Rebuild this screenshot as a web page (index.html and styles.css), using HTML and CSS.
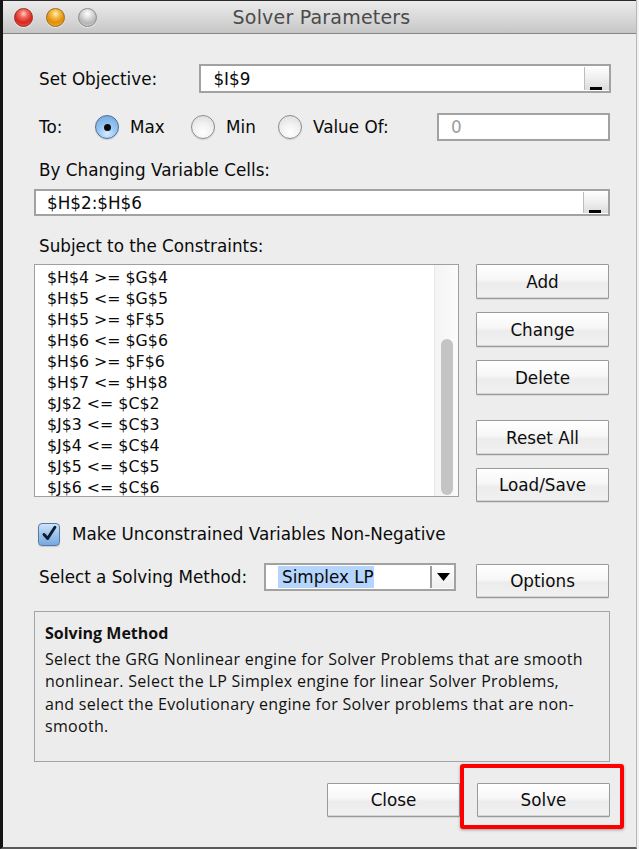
FILE: index.html
```html
<!DOCTYPE html>
<html>
<head>
<meta charset="utf-8">
<title>Solver Parameters</title>
<link rel="stylesheet" href="styles.css">
</head>
<body>
<div class="window">
  <div class="titlebar">
    <div class="lights"><span class="light red"></span><span class="light yellow"></span><span class="light grey"></span></div>
    <div class="title">Solver Parameters</div>
    <div></div>
  </div>
  <div class="content">
    <div class="row objective">
      <span class="lbl obj-lbl">Set Objective:</span>
      <div class="field picker-field obj-field"><span class="val">$I$9</span><span class="picker"><span class="bar"></span></span></div>
    </div>
    <div class="row to-row">
      <span class="lbl to-lbl">To:</span>
      <span class="radio on"><span class="dot"></span></span><span class="opt opt-max">Max</span>
      <span class="radio"></span><span class="opt opt-min">Min</span>
      <span class="radio"></span><span class="opt opt-val">Value Of:</span>
      <div class="field value-field"><span class="val dim">0</span></div>
    </div>
    <div class="lbl section-lbl var-lbl">By Changing Variable Cells:</div>
    <div class="field picker-field var-field"><span class="val">$H$2:$H$6</span><span class="picker"><span class="bar"></span></span></div>
    <div class="lbl section-lbl con-lbl">Subject to the Constraints:</div>
    <div class="constraints">
      <div class="list">
        <div class="items">
          <div>$H$4 &gt;= $G$4</div>
          <div>$H$5 &lt;= $G$5</div>
          <div>$H$5 &gt;= $F$5</div>
          <div>$H$6 &lt;= $G$6</div>
          <div>$H$6 &gt;= $F$6</div>
          <div>$H$7 &lt;= $H$8</div>
          <div>$J$2 &lt;= $C$2</div>
          <div>$J$3 &lt;= $C$3</div>
          <div>$J$4 &lt;= $C$4</div>
          <div>$J$5 &lt;= $C$5</div>
          <div>$J$6 &lt;= $C$6</div>
        </div>
        <div class="track"><div class="thumb"></div></div>
      </div>
      <div class="btn-col">
        <div class="btn">Add</div>
        <div class="btn">Change</div>
        <div class="btn">Delete</div>
        <div class="btn reset">Reset All</div>
        <div class="btn">Load/Save</div>
      </div>
    </div>
    <div class="row check-row">
      <span class="checkbox"><svg width="22" height="22" viewBox="0 0 22 22"><path d="M5.5 11.5 L9.5 16 L17.5 3.5" fill="none" stroke="#0f1c33" stroke-width="3.2" stroke-linecap="round" stroke-linejoin="round"/></svg></span>
      <span class="lbl check-lbl">Make Unconstrained Variables Non-Negative</span>
    </div>
    <div class="row method-row">
      <span class="lbl method-lbl">Select a Solving Method:</span>
      <div class="select"><span class="sel-text">Simplex LP</span><span class="sel-arrow"><svg width="13" height="8" viewBox="0 0 13 8"><path d="M0 0 H13 L6.5 8 Z" fill="#000"/></svg></span></div>
      <div class="btn options">Options</div>
    </div>
    <div class="info">
      <div class="info-title">Solving Method</div>
      <div class="info-text">Select the GRG Nonlinear engine for Solver Problems that are smooth<br>nonlinear. Select the LP Simplex engine for linear Solver Problems,<br>and select the Evolutionary engine for Solver problems that are non-<br>smooth.</div>
    </div>
    <div class="footer">
      <div class="btn">Close</div>
      <div class="btn">Solve</div>
    </div>
  </div>
  <div class="highlight"></div>
</div>
</body>
</html>
```

FILE: styles.css
```css
* { box-sizing: border-box; }
html, body { margin: 0; padding: 0; }
body {
  width: 639px;
  height: 849px;
  background: #f2f2f2;
  font-family: "DejaVu Sans", "Liberation Sans", sans-serif;
  font-size: 16.8px;
  color: #0a0a0a;
  overflow: hidden;
}
.window {
  position: relative;
  width: 637px;
  height: 849px;
  background: #ededed;
  border-left: 3px solid #141414;
  border-right: 1px solid #b8b8b8;
  border-bottom: 2px solid #5a5a5a;
}
.titlebar {
  height: 34px;
  border-top: 1px solid #2a2a2a;
  border-bottom: 1px solid #858585;
  background: linear-gradient(#ebebeb, #d6d6d6 60%, #c6c6c6);
  display: grid;
  grid-template-columns: 1fr auto 1fr;
  align-items: center;
}
.lights { display: flex; gap: 13px; padding-left: 11px; padding-top: 1px; }
.light {
  width: 19px; height: 19px; border-radius: 50%;
  box-shadow: 0 1px 1px rgba(255,255,255,0.6);
}
.light.red {
  background: radial-gradient(circle at 50% 28%, #ffd0c8 0, #f36b5f 25%, #d8261c 60%, #ee6a5e 100%);
  border: 1px solid #9b2b25;
}
.light.yellow {
  background: radial-gradient(circle at 50% 28%, #fff0c0 0, #f7c04a 25%, #de8d08 60%, #f6c24a 100%);
  border: 1px solid #a06a14;
}
.light.grey {
  background: radial-gradient(circle at 50% 28%, #ffffff 0, #dedede 30%, #b5b5b5 65%, #d8d8d8 100%);
  border: 1px solid #8c8c8c;
}
.title {
  font-size: 19px;
  color: #4b4b4b;
  padding-left: 4px;
  letter-spacing: 0.2px;
}
.content { padding: 30px 25px 0 31px; }
.row { display: flex; align-items: center; }
.lbl { white-space: nowrap; }
.objective { height: 29px; }
.obj-lbl { width: 166px; padding-left: 5px; }
.field {
  background: #fff;
  border: 2px solid #a2a2a2;
  display: flex;
  align-items: center;
}
.picker-field { padding: 1px 0 1px 12px; align-items: stretch; }
.picker-field .val { flex: 1; display: flex; align-items: center; }
.obj-field { width: 413px; height: 29px; }
.picker {
  width: 25px;
  border-left: 1px solid #bdbdbd;
  background: linear-gradient(#fdfdfd, #f0f0f0 45%, #dcdcdc);
  display: flex;
  align-items: flex-end;
  padding-left: 5px;
}
.bar { width: 12px; height: 3px; background: #050505; }
.to-row { height: 28px; margin-top: 20px; }
.to-lbl { width: 61px; padding-left: 5px; }
.radio {
  width: 24px; height: 24px; border-radius: 50%;
  border: 1px solid #8c8c8c;
  background: radial-gradient(circle at 50% 75%, #ffffff 0, #f1f1f1 45%, #d9d9d9 100%);
  box-shadow: 0 1px 1px rgba(0,0,0,0.12);
  margin-right: 11px;
  display: flex; align-items: center; justify-content: center;
}
.radio.on {
  border-color: #4d6f98;
  background: radial-gradient(circle at 50% 80%, #d6ebff 0, #9cc8f3 40%, #6aa3dd 100%);
}
.dot { width: 7px; height: 7px; border-radius: 50%; background: #0b0b0b; }
.opt-max { width: 61px; }
.opt-min { width: 52px; }
.opt-val { width: 124px; }
.value-field { width: 173px; height: 28px; padding-left: 12px; }
.dim { color: #9d9d9d; }
.section-lbl { height: 24px; line-height: 24px; padding-left: 5px; }
.var-lbl { margin-top: 17px; }
.var-field { margin-top: 7px; width: 576px; height: 27px; padding-left: 11px; }
.con-lbl { margin-top: 18px; }
.constraints { display: flex; margin-top: 6px; gap: 17px; }
.list {
  width: 425px; height: 233px;
  background: #fff;
  border: 1px solid #a0a0a0;
  display: flex;
}
.items { flex: 1; padding: 2px 0 0 12px; line-height: 21px; font-size: 15.8px; }
.track {
  width: 24px;
  border-left: 1px solid #e8e8e8;
  background: linear-gradient(90deg, #f4f4f4, #fbfbfb);
  padding: 74px 0 2px 6px;
}
.thumb { width: 12px; height: 156px; border-radius: 6px; background: #c4c4c4; }
.btn-col { display: flex; flex-direction: column; gap: 13px; }
.btn {
  width: 133px; height: 35px;
  border: 1px solid #9a9a9a;
  border-radius: 1px;
  background: linear-gradient(#ffffff, #f7f7f7 45%, #ececec 55%, #f1f1f1);
  box-shadow: 0 1px 0 rgba(0,0,0,0.08), inset 0 -1px 0 #d5d5d5;
  display: flex; align-items: center; justify-content: center;
  color: #0c0c0c;
}
.btn-col .reset { margin-top: 12px; }
.btn-col .btn:last-child { height: 34px; }
.check-row { margin-top: 20px; height: 24px; padding-left: 4px; }
.checkbox {
  width: 22px; height: 23px;
  border: 1px solid #557aa3;
  border-radius: 4px;
  background: linear-gradient(#cfe4fa, #9dc3ec 50%, #77a8e0);
  box-shadow: 0 1px 1px rgba(0,0,0,0.15);
  display: flex; align-items: center; justify-content: center;
}
.checkbox svg { display: block; }
.check-lbl { margin-left: 12px; }
.method-row { margin-top: 17px; align-items: flex-start; height: 34px; }
.method-lbl { width: 230px; padding-left: 5px; height: 28px; line-height: 28px; }
.select {
  width: 192px; height: 28px;
  background: #fff;
  border: 2px solid #a2a2a2;
  display: flex;
  align-items: stretch;
  padding: 1px 0 1px 12px;
}
.sel-text {
  width: 96px;
  background: #b5d5fd;
  padding-left: 4px;
  display: flex; align-items: center;
  margin-right: auto;
}
.sel-arrow {
  width: 24px;
  border-left: 2px solid #9c9c9c;
  background: linear-gradient(#ffffff, #eeeeee);
  display: flex; align-items: center; justify-content: center;
}
.sel-arrow svg { display: block; }
.options { margin-left: 20px; margin-top: 1px; height: 34px; }
.info {
  margin-top: 14px;
  width: 576px; height: 151px;
  border: 1px solid #a4a4a4;
  background: #ececec;
  padding: 9px 10px 0 10px;
  font-family: "Open Sans", "Noto Sans", sans-serif;
  color: #111;
}
.info-title { font-weight: bold; font-size: 16px; line-height: 24px; }
.info-text { margin-top: 3px; font-size: 16px; line-height: 22.3px; white-space: nowrap; letter-spacing: 0.3px; }
.footer { margin-top: 21px; display: flex; justify-content: flex-end; gap: 17px; padding-right: 1px; }
.footer .btn { height: 34px; }
.footer .btn:first-child { width: 133px; }
.highlight {
  position: absolute;
  left: 457px; top: 764px;
  width: 164px; height: 65px;
  border: 4px solid #fe0000;
  border-radius: 3px;
  box-shadow: 0 1px 3px rgba(0,0,0,0.35);
}
```
